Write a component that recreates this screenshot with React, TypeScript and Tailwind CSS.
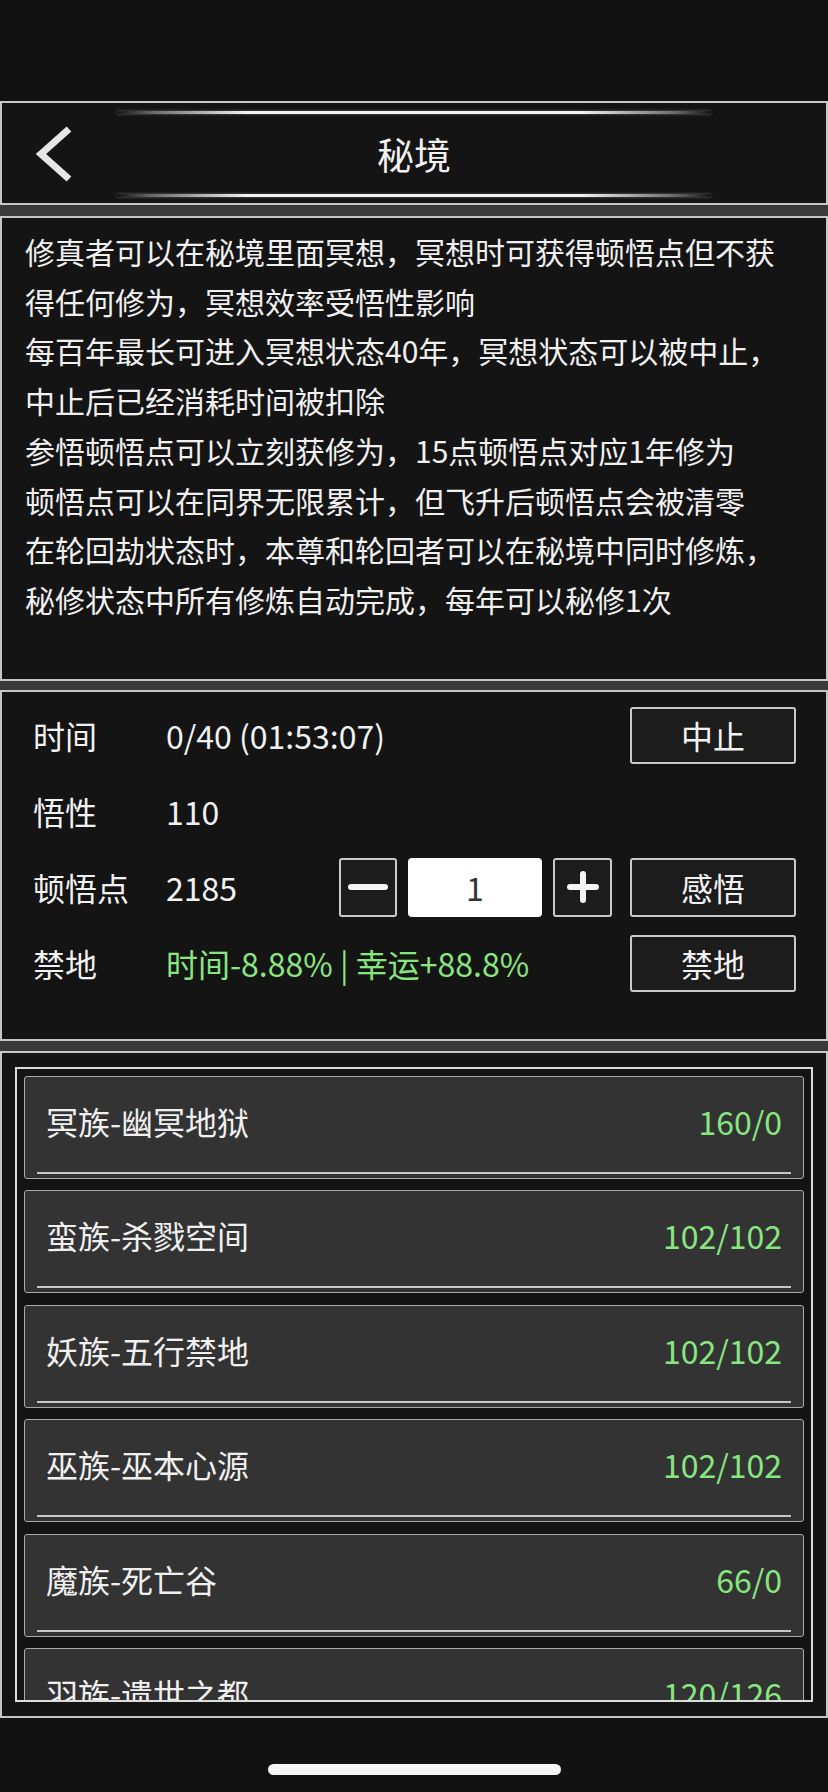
export default function App() {
  const desc = [
    "修真者可以在秘境里面冥想，冥想时可获得顿悟点但不获",
    "得任何修为，冥想效率受悟性影响",
    "每百年最长可进入冥想状态40年，冥想状态可以被中止，",
    "中止后已经消耗时间被扣除",
    "参悟顿悟点可以立刻获修为，15点顿悟点对应1年修为",
    "顿悟点可以在同界无限累计，但飞升后顿悟点会被清零",
    "在轮回劫状态时，本尊和轮回者可以在秘境中同时修炼，",
    "秘修状态中所有修炼自动完成，每年可以秘修1次",
  ];
  const items = [
    { name: "冥族-幽冥地狱", value: "160/0" },
    { name: "蛮族-杀戮空间", value: "102/102" },
    { name: "妖族-五行禁地", value: "102/102" },
    { name: "巫族-巫本心源", value: "102/102" },
    { name: "魔族-死亡谷", value: "66/0" },
    { name: "羽族-遗世之都", value: "120/126" },
  ];
  const glow =
    "mx-auto w-[594px] h-[3px] shrink-0 bg-[linear-gradient(to_right,transparent_0%,#6a6a6a_6%,#f4f4f4_22%,#f4f4f4_78%,#6a6a6a_94%,transparent_100%)] shadow-[0_0_3px_rgba(255,255,255,0.35)]";
  const btn =
    "w-[166px] h-[57px] shrink-0 flex items-center justify-center bg-[#1c1c1c] border-2 border-[#c9c9c9] rounded-[3px] text-[32px] text-[#f2f2f2]";
  return (
    <div className="w-[828px] h-[1792px] bg-[#121212] flex flex-col overflow-hidden font-['Noto_Sans_CJK_SC','Noto_Sans',sans-serif] text-[#f2f2f2]">
      <div className="h-[101px] shrink-0" />
      <div className="flex flex-col bg-[#3a3a3a]">
        {/* Header */}
        <div className="h-[104px] border-2 border-[#c6c6c6] bg-[#141414] flex flex-col pt-[8px] pb-[6px]">
          <div className={glow} />
          <div className="flex-1 grid grid-cols-[1fr_auto_1fr] items-center">
            <div className="pl-[30px] flex items-center">
              <svg width="44" height="64" viewBox="0 0 44 64">
                <path
                  d="M37 7 L9 32 L37 57"
                  fill="none"
                  stroke="#e6e6e6"
                  strokeWidth="7"
                  strokeLinejoin="miter"
                  strokeLinecap="butt"
                />
              </svg>
            </div>
            <div className="text-[37px] leading-none">秘境</div>
            <div />
          </div>
          <div className={glow} />
        </div>

        {/* Description */}
        <div className="mt-[11px] h-[465px] border-2 border-[#c6c6c6] bg-[#141414] pt-[9px] pl-[23px]">
          {desc.map((l, i) => (
            <div key={i} className="text-[30px] leading-[49.7px] whitespace-nowrap text-[#f0f0f0]">
              {l}
            </div>
          ))}
        </div>

        {/* Stats */}
        <div className="mt-[9px] h-[351px] border-2 border-[#c6c6c6] bg-[#141414] pt-[5px] pl-[31px] pr-[30px] flex flex-col text-[32px]">
          <div className="h-[76px] flex items-center">
            <div className="w-[133px]">时间</div>
            <div className="flex-1">0/40 (01:53:07)</div>
            <div className={btn}>中止</div>
          </div>
          <div className="h-[76px] flex items-center">
            <div className="w-[133px]">悟性</div>
            <div className="flex-1">110</div>
          </div>
          <div className="h-[76px] flex items-center">
            <div className="w-[133px]">顿悟点</div>
            <div className="flex-1">2185</div>
            <div className="w-[58px] h-[59px] shrink-0 flex items-center justify-center bg-[#1c1c1c] border-2 border-[#c9c9c9] rounded-[3px]">
              <svg width="42" height="8" viewBox="0 0 42 8">
                <line x1="4" y1="4" x2="38" y2="4" stroke="#f4f4f4" strokeWidth="6" strokeLinecap="round" />
              </svg>
            </div>
            <div className="ml-[11px] w-[134px] h-[59px] shrink-0 flex items-center justify-center bg-white rounded-[4px] text-[#333] text-[32px]">
              1
            </div>
            <div className="ml-[11px] w-[59px] h-[59px] shrink-0 flex items-center justify-center bg-[#1c1c1c] border-2 border-[#c9c9c9] rounded-[3px]">
              <svg width="34" height="34" viewBox="0 0 34 34">
                <line x1="4" y1="17" x2="30" y2="17" stroke="#f4f4f4" strokeWidth="6" strokeLinecap="round" />
                <line x1="17" y1="4" x2="17" y2="30" stroke="#f4f4f4" strokeWidth="6" strokeLinecap="round" />
              </svg>
            </div>
            <div className={`${btn} ml-[18px] h-[59px]`}>感悟</div>
          </div>
          <div className="h-[76px] flex items-center">
            <div className="w-[133px]">禁地</div>
            <div className="flex-1 text-[#88e680]">时间-8.88% | 幸运+88.8%</div>
            <div className={btn}>禁地</div>
          </div>
        </div>

        {/* List */}
        <div className="mt-[10px] h-[667px] border-2 border-[#c6c6c6] bg-[#141414] px-[13px] py-[14px] flex flex-col">
          <div className="flex-1 border-2 border-[#dcdcdc] overflow-hidden px-[7px] pt-[7px] flex flex-col gap-[11.4px]">
            {items.map((it, i) => (
              <div
                key={i}
                className="h-[103px] shrink-0 bg-[#333333] border border-[#a9a9a9] rounded-[3px] flex flex-col"
              >
                <div className="h-[88px] flex items-center justify-between px-[21px] text-[32px]">
                  <span className="text-[#f0f0f0]">{it.name}</span>
                  <span className="text-[#88e680]">{it.value}</span>
                </div>
                <div className="mt-[7px] mx-[12px] h-[2px] bg-[#c8c8c8]" />
              </div>
            ))}
          </div>
        </div>
      </div>

      {/* Home indicator */}
      <div className="flex-1 pt-[46px]">
        <div className="mx-auto w-[293px] h-[11px] rounded-full bg-[#f5f5f5]" />
      </div>
    </div>
  );
}
